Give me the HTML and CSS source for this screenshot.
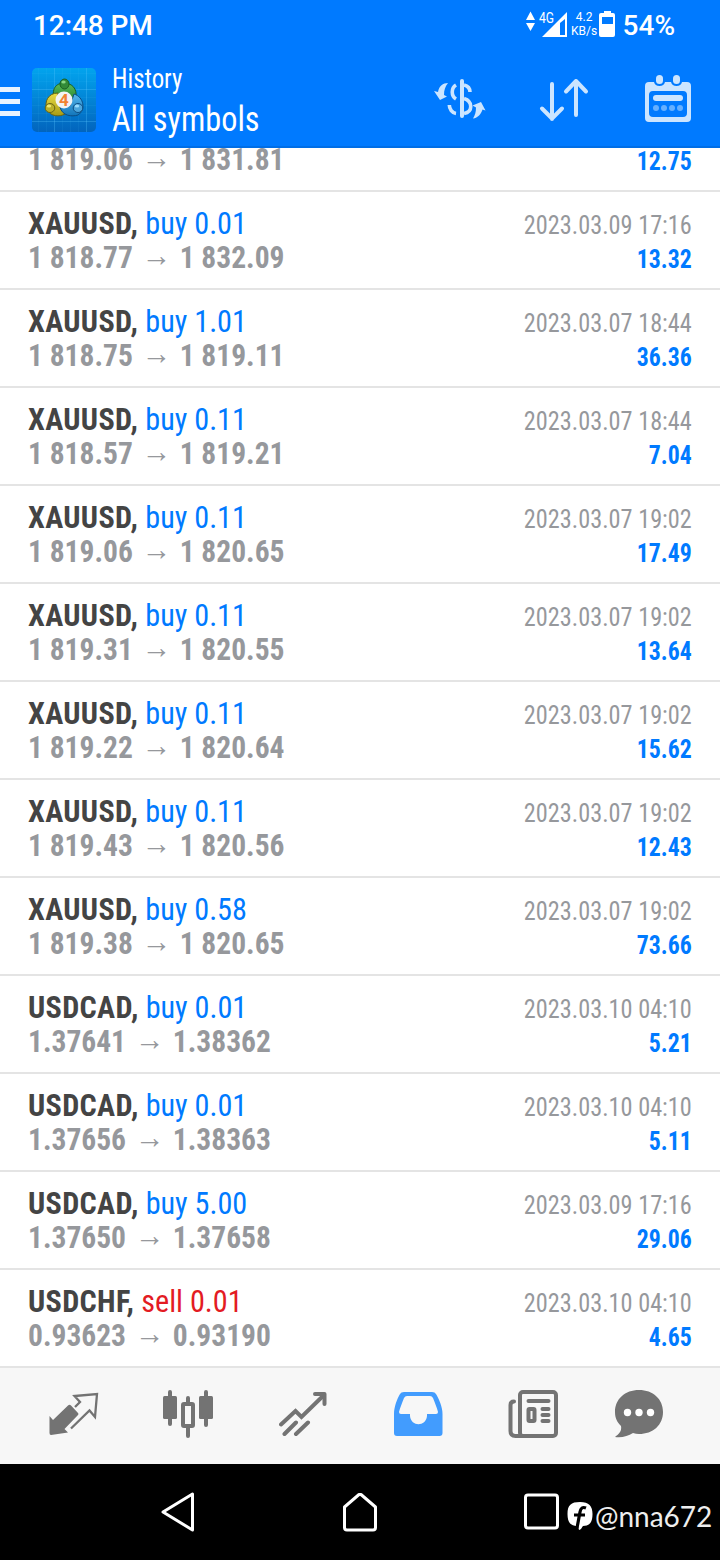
FILE: index.html
```html
<!DOCTYPE html>
<html lang="en">
<head>
<meta charset="utf-8">
<title>History</title>
<link rel="stylesheet" href="styles.css">
</head>
<body>
<div class="phone">
<header class="top">
  <div class="status">
    <span class="clock">12:48 PM</span>
    <svg class="signal" width="42" height="30" viewBox="0 0 42 30"><g fill="#fff"><path d="M4.500 3.500 9 12H0zM0 15h9l-4.500 8z"/><path fill-rule="evenodd" d="M41 4v25H16zM34 15v12h5V11z"/></g><text class="net" x="13" y="15" textLength="15" lengthAdjust="spacingAndGlyphs">4G</text></svg>
    <span class="rate"><span>4.2</span><span>KB/s</span></span>
    <svg class="battery" width="16" height="26" viewBox="0 0 16 26"><path fill="#fff" fill-rule="evenodd" d="M5 0h7v2h2q2 0 2 2v20q0 2-2 2H2q-2 0-2-2V4q0-2 2-2h3zM3 6v7h11V6z"/></svg>
    <span class="percent">54%</span>
  </div>
  <div class="bar">
    <svg class="menu" width="20" height="30" viewBox="0 0 20 30"><path d="M0 2.500h20M0 14.500h20M0 26.500h20" stroke="#e8f3ff" stroke-width="5"/></svg>
    <svg class="logo" width="64" height="64" viewBox="0 0 64 64">
      <defs>
        <linearGradient id="bg" x2="0" y2="1"><stop stop-color="#02a4ee"/><stop offset="1" stop-color="#0264bd"/></linearGradient>
        <linearGradient id="gr" x2="0" y2="1"><stop stop-color="#5dbd57"/><stop offset="1" stop-color="#26822f"/></linearGradient>
        <linearGradient id="ye" x2="0" y2="1"><stop stop-color="#e9dc45"/><stop offset="1" stop-color="#a89b13"/></linearGradient>
        <linearGradient id="bl" x2="0" y2="1"><stop stop-color="#58b8ee"/><stop offset="1" stop-color="#1175ba"/></linearGradient>
      </defs>
      <rect width="64" height="64" rx="5" fill="url(#bg)"/>
      <path d="M22.500 0v64M54.500 0v64M0 21.500h64M0 53.500h64" stroke="#5bc6ff" stroke-opacity=".3"/>
      <path d="M6.500 0v64M14.500 0v64M30.500 0v64M38.500 0v64M46.500 0v64M0 5.500h64M0 13.500h64M0 29.500h64M0 37.500h64M0 45.500h64" stroke="#5bc6ff" stroke-opacity=".08"/>
      <g stroke-width="1">
        <path d="M22 32C19 18 26 15 33 15c10 1 13 9 10 18L32 27z" fill="url(#gr)" stroke="#185f24"/>
        <path d="M26 25c-10 0-14 9-11 16 3 8 13 8 18 5l-8-11z" fill="url(#ye)" stroke="#686413"/>
        <path d="M28 39c2 9 12 10 18 8 8-5 6-18-4-21l-4 12z" fill="url(#bl)" stroke="#0b4d84"/>
        <ellipse cx="32.500" cy="16" rx="4.500" ry="5" fill="#328a37" stroke="#185f24"/>
        <ellipse cx="18" cy="40" rx="4.800" ry="4.500" fill="#bbb12a" stroke="#686413"/>
        <ellipse cx="46" cy="40" rx="4.800" ry="4.500" fill="#4ba5dc" stroke="#0b4d84"/>
        <ellipse cx="31.500" cy="14" rx="2.200" ry="1.500" fill="#88d684"/><ellipse cx="17" cy="38" rx="2.200" ry="1.500" fill="#eee875"/><ellipse cx="45" cy="38" rx="2.200" ry="1.500" fill="#9bddff"/>
      </g>
      <circle cx="32" cy="32" r="8.500" fill="#f2f3f4"/>
      <text class="four" x="32" y="37.500" text-anchor="middle">4</text>
    </svg>
    <div class="titles cond"><span class="sub">History</span><span class="main">All symbols</span></div>
    <div class="actions">
      <svg width="54" height="50" viewBox="0 0 54 50"><path fill="#cce5ff" d="M15 9C10 9 6 12 5 18L1 17l6 9 7-3.500-3-1.500C11 16 12 13 15 9zM52.500 36.500 48 28l-8.500 3.500 3.500 2c0 4.500-1 7.500-3 11 5-.5 8-4.500 9.500-9z"/><g fill="none" stroke="#cce5ff" stroke-width="3.600"><path d="M29 7v35" stroke-width="4" stroke-linecap="round"/><path d="M23 11c-5 3-5 11 0 14M16.300 31c0 4 3 8 6.700 8.500M31 11c4 1 6 3 6 7"/><path d="M31 24.500c9 3 9 13 0 15"/></g></svg>
      <svg width="50" height="46" viewBox="0 0 50 46" fill="none" stroke="#cce5ff" stroke-width="4" stroke-linecap="round" stroke-linejoin="round"><path d="M13 8v35M3 32.500 13 42.500l10-10M37 39V5M27 15.500 37 5 47 15.500"/></svg>
      <svg width="46" height="48" viewBox="0 0 46 48"><path fill="#cce5ff" fill-rule="evenodd" d="M4 7h5q1 4 5.500 4T20 7h6q1 4 5.500 4T37 7h5q4 0 4 4v32q0 4-4 4H4q-4 0-4-4V11q0-4 4-4zM8 16q-4 0-4 4v18q0 4 4 4h30q4 0 4-4V20q0-4-4-4z"/><rect x="11" y="0" width="7" height="9" rx="3.500" fill="#cce5ff"/><rect x="28" y="0" width="7" height="9" rx="3.500" fill="#cce5ff"/><rect x="8" y="20" width="30" height="6" rx="3" fill="#cce5ff"/><g fill="#66b0ff"><circle cx="11" cy="33" r="3"/><circle cx="19" cy="33" r="3"/><circle cx="27" cy="33" r="3"/><circle cx="35" cy="33" r="3"/></g></svg>
    </div>
  </div>
</header>
<main class="list cond">
  <div class="row"><div class="deal"><div class="name"><b>XAUUSD,</b> <span class="buy">buy 0.01</span></div><div class="price">1 819.06 <i>→</i> 1 831.81</div></div><div class="result"><div class="date">2023.03.09 17:16</div><div class="profit">12.75</div></div></div>
  <div class="row"><div class="deal"><div class="name"><b>XAUUSD,</b> <span class="buy">buy 0.01</span></div><div class="price">1 818.77 <i>→</i> 1 832.09</div></div><div class="result"><div class="date">2023.03.09 17:16</div><div class="profit">13.32</div></div></div>
  <div class="row"><div class="deal"><div class="name"><b>XAUUSD,</b> <span class="buy">buy 1.01</span></div><div class="price">1 818.75 <i>→</i> 1 819.11</div></div><div class="result"><div class="date">2023.03.07 18:44</div><div class="profit">36.36</div></div></div>
  <div class="row"><div class="deal"><div class="name"><b>XAUUSD,</b> <span class="buy">buy 0.11</span></div><div class="price">1 818.57 <i>→</i> 1 819.21</div></div><div class="result"><div class="date">2023.03.07 18:44</div><div class="profit">7.04</div></div></div>
  <div class="row"><div class="deal"><div class="name"><b>XAUUSD,</b> <span class="buy">buy 0.11</span></div><div class="price">1 819.06 <i>→</i> 1 820.65</div></div><div class="result"><div class="date">2023.03.07 19:02</div><div class="profit">17.49</div></div></div>
  <div class="row"><div class="deal"><div class="name"><b>XAUUSD,</b> <span class="buy">buy 0.11</span></div><div class="price">1 819.31 <i>→</i> 1 820.55</div></div><div class="result"><div class="date">2023.03.07 19:02</div><div class="profit">13.64</div></div></div>
  <div class="row"><div class="deal"><div class="name"><b>XAUUSD,</b> <span class="buy">buy 0.11</span></div><div class="price">1 819.22 <i>→</i> 1 820.64</div></div><div class="result"><div class="date">2023.03.07 19:02</div><div class="profit">15.62</div></div></div>
  <div class="row"><div class="deal"><div class="name"><b>XAUUSD,</b> <span class="buy">buy 0.11</span></div><div class="price">1 819.43 <i>→</i> 1 820.56</div></div><div class="result"><div class="date">2023.03.07 19:02</div><div class="profit">12.43</div></div></div>
  <div class="row"><div class="deal"><div class="name"><b>XAUUSD,</b> <span class="buy">buy 0.58</span></div><div class="price">1 819.38 <i>→</i> 1 820.65</div></div><div class="result"><div class="date">2023.03.07 19:02</div><div class="profit">73.66</div></div></div>
  <div class="row"><div class="deal"><div class="name"><b>USDCAD,</b> <span class="buy">buy 0.01</span></div><div class="price">1.37641 <i>→</i> 1.38362</div></div><div class="result"><div class="date">2023.03.10 04:10</div><div class="profit">5.21</div></div></div>
  <div class="row"><div class="deal"><div class="name"><b>USDCAD,</b> <span class="buy">buy 0.01</span></div><div class="price">1.37656 <i>→</i> 1.38363</div></div><div class="result"><div class="date">2023.03.10 04:10</div><div class="profit">5.11</div></div></div>
  <div class="row"><div class="deal"><div class="name"><b>USDCAD,</b> <span class="buy">buy 5.00</span></div><div class="price">1.37650 <i>→</i> 1.37658</div></div><div class="result"><div class="date">2023.03.09 17:16</div><div class="profit">29.06</div></div></div>
  <div class="row"><div class="deal"><div class="name"><b>USDCHF,</b> <span class="sell">sell 0.01</span></div><div class="price">0.93623 <i>→</i> 0.93190</div></div><div class="result"><div class="date">2023.03.10 04:10</div><div class="profit">4.65</div></div></div>
</main>
<nav class="tabs">
  <svg width="50" height="44" viewBox="0 0 50 44"><path fill="#737373" d="M.500 24 4 28 19 13.500Q20.500 12 22 13.500l7 7.500q1 1 0 2L15.500 37l3.500 3.500L2 43Q.500 43 .500 41z"/><path d="M26 15 31 10 25.500 4 48 2 46 25 40.500 18.500 22 36.500" fill="none" stroke="#737373" stroke-width="2.300"/></svg>
  <svg width="52" height="50" viewBox="0 0 52 50"><g stroke="#737373" stroke-width="4" stroke-linecap="round"><path d="M8 3v32M44 3v33M26 9v38"/></g><rect x="1" y="7" width="14" height="23" rx="1.500" fill="#737373"/><rect x="37" y="7" width="14" height="23" rx="1.500" fill="#737373"/><rect x="21" y="15" width="10" height="22" rx="1" fill="#f7f7f7" stroke="#737373" stroke-width="4"/></svg>
  <svg width="48" height="46" viewBox="0 0 48 46" fill="none" stroke="#737373" stroke-width="4" stroke-linecap="round"><path d="M2 33.500 16.500 20l6 6L45 4M5.500 43 17 31.500M17 43l12-11.500"/><path d="M36 3h9.500v10" stroke-linejoin="round"/></svg>
  <svg width="50" height="46" viewBox="0 0 50 46"><path fill="#429cfe" fill-rule="evenodd" d="M11 1h28q3 0 4 2c3 5 6.500 13 6.500 20v19q0 3-3 3H4q-3 0-3-3V23C1 16 4 8 7 3q1-2 4-2zM14 5q-2 0-3 2C9 12 7 17 6 21q0 2 2 2h9v2c1 11 16 11 17 0v-2h9q2 0 2-2c-1-4-3-9-5-14q-1-2-3-2z"/></svg>
  <svg width="52" height="50" viewBox="0 0 52 50" fill="none" stroke="#737373" stroke-width="4"><rect x="13" y="3" width="36" height="44" rx="3"/><path d="M7 12.500Q3.500 12.500 3.500 16v26q0 5 5 5H16M21.500 12h20M35.500 20h6M35.500 26h6M35.500 32h6" stroke-linecap="round"/><rect x="21.500" y="20" width="6" height="12" rx="1"/></svg>
  <svg width="50" height="50" viewBox="0 0 50 50"><path fill="#737373" d="M25 1C11 1 1 10 1 23c0 6 2 10 6 14 1 5-2 8-6 11 7 1 13-1 18-4q3 1 6 1c14 0 24-9 24-22S39 1 25 1z"/><g fill="#fff"><circle cx="13.500" cy="23.500" r="3.700"/><circle cx="25" cy="23.500" r="3.700"/><circle cx="36.500" cy="23.500" r="3.700"/></g></svg>
</nav>
<footer class="system">
  <svg width="36" height="42" viewBox="0 0 36 42"><path d="M32.500 3v36L3 21z" fill="none" stroke="#fff" stroke-width="3" stroke-linejoin="round"/></svg>
  <svg width="36" height="42" viewBox="0 0 36 42"><path d="M2.500 16 17 3.500h2L33.500 16v20.500q0 2.500-2.500 2.500H5q-2.500 0-2.500-2.500z" fill="none" stroke="#fff" stroke-width="3" stroke-linejoin="round"/></svg>
  <svg width="36" height="38" viewBox="0 0 36 38"><rect x="1.500" y="2" width="32" height="33" rx="2.500" fill="none" stroke="#fff" stroke-width="3"/></svg>
  <span class="mark"><svg width="26" height="30" viewBox="0 0 26 30"><path fill="#fff" d="M13 1C4 1 .500 4 .500 13S4 25 11 25l1 4c2 0 3-3 4-4 7 0 9.500-4 9.500-12S22 1 13 1z"/><path d="M19 7q-5-2-6 4L10 27M7 14h11" fill="none" stroke="#000" stroke-width="3.200"/></svg><span class="handle">@nna672</span></span>
</footer>
</div>
</body>
</html>
```
FILE: styles.css
```css
* { box-sizing: border-box; }
body { margin: 0; font-family: Roboto, sans-serif; }
svg { display: block; flex: none; }
.phone { width: 720px; height: 1560px; display: flex; flex-direction: column; overflow: hidden; background: #fff; }
.cond { font-family: "Roboto Condensed", Roboto, sans-serif; font-stretch: 75%; }
.top { height: 148px; flex: none; background: #007aff; border-bottom: 2px solid #006ee6; color: #fff; }
.status { height: 52px; display: flex; align-items: flex-start; padding: 8px 45px 0 33px; }
.clock, .percent { font-size: 28px; font-weight: 500; line-height: 34px; padding-top: 1px; white-space: nowrap; }
.clock { flex: 1; letter-spacing: -.1px; }
.signal { margin-right: 3px; }
.net { font-size: 14px; fill: #fff; }
.rate { width: 27px; display: flex; flex-direction: column; align-items: center; font-size: 12px; line-height: 14px; padding-top: 2px; }
.battery { margin: 3px 8px 0 1px; }
.bar { height: 94px; display: flex; align-items: flex-start; padding-right: 29px; }
.menu { margin-top: 35px; }
.logo { margin: 16px 16px 0 12px; }
.four { font: bold 17px Roboto, sans-serif; fill: #f28232; }
.titles { display: flex; flex-direction: column; flex: 1; white-space: nowrap; transform: scaleX(.922); transform-origin: left; }
.sub { font-size: 27px; line-height: 32px; margin-top: 11px; }
.main { font-size: 35px; line-height: 42px; margin-top: 4px; }
.actions { display: flex; align-items: center; height: 94px; }
.actions svg:nth-child(2) { margin: 0 56px 0 52px; }
.list { height: 1220px; flex: none; display: flex; flex-direction: column; justify-content: flex-end; overflow: hidden; }
.row { height: 98px; flex: none; display: flex; justify-content: space-between; padding: 14px 28px 0; border-bottom: 2px solid #e4e4e4; line-height: 34px; white-space: nowrap; }
.name, .price { font-size: 32px; transform-origin: left; }
.name { color: #444; transform: scaleX(.943); }
.name b { letter-spacing: .35px; }
.price { font-weight: 700; color: #96989c; transform: scaleX(.922); }
.price i { display: inline-block; font-style: normal; font-weight: 400; margin: 0 2px; transform: translateY(-2px); line-height: 30px; }
.buy { color: #007aff; }
.sell { color: #e31b23; }
.result { text-align: right; font-size: 26px; padding-top: 2px; }
.date, .profit { transform-origin: right; }
.date { color: #96989c; transform: scaleX(.934); }
.profit { font-weight: 700; color: #007aff; transform: scaleX(.915); }
.tabs { height: 96px; flex: none; display: flex; align-items: center; padding: 0 0 4px 49px; background: #f7f7f7; }
.tabs svg:nth-child(2) { margin: 0 65px 0 63px; }
.tabs svg:nth-child(4) { margin: 0 64px 0 66px; }
.tabs svg:nth-child(6) { margin-left: 55px; }
.system { height: 96px; flex: none; display: flex; align-items: center; padding-left: 160px; background: #000; }
.system > svg { margin-right: 146px; }
.system > svg:nth-of-type(3) { margin-right: 7px; }
.mark { display: flex; align-items: center; gap: 2px; padding-top: 8px; }
.handle { color: #eee; font: 400 28px Lato, sans-serif; }
```
